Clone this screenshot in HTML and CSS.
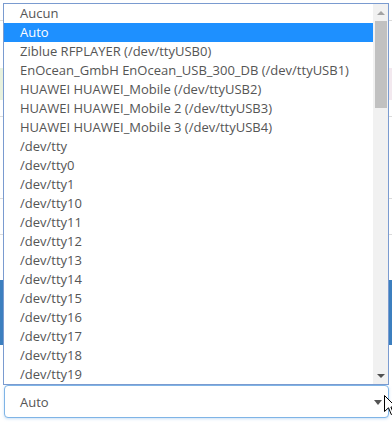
FILE: index.html
```html
<!DOCTYPE html>
<html>
<head>
<meta charset="utf-8">
<title>Select</title>
<link rel="stylesheet" href="styles.css">
</head>
<body>
<div class="page">
  <div class="bg-row bg-top"></div>
  <div class="bg-gap g1"></div>
  <div class="bg-green"></div>
  <div class="bg-row bg-b"></div>
  <div class="bg-row bg-c"></div>
  <div class="bg-row bg-d"></div>
  <div class="bg-gap g2"></div>
  <div class="bg-blue"></div>
  <div class="bg-gap g3"></div>
  <div class="select">
    <span class="select-value">Auto</span>
    <span class="caret"></span>
  </div>
</div>

<div class="popup">
  <div class="options">
    <div class="opt">Aucun</div>
    <div class="opt selected">Auto</div>
    <div class="opt">Ziblue RFPLAYER (/dev/ttyUSB0)</div>
    <div class="opt">EnOcean_GmbH EnOcean_USB_300_DB (/dev/ttyUSB1)</div>
    <div class="opt">HUAWEI HUAWEI_Mobile (/dev/ttyUSB2)</div>
    <div class="opt">HUAWEI HUAWEI_Mobile 2 (/dev/ttyUSB3)</div>
    <div class="opt">HUAWEI HUAWEI_Mobile 3 (/dev/ttyUSB4)</div>
    <div class="opt">/dev/tty</div>
    <div class="opt">/dev/tty0</div>
    <div class="opt">/dev/tty1</div>
    <div class="opt">/dev/tty10</div>
    <div class="opt">/dev/tty11</div>
    <div class="opt">/dev/tty12</div>
    <div class="opt">/dev/tty13</div>
    <div class="opt">/dev/tty14</div>
    <div class="opt">/dev/tty15</div>
    <div class="opt">/dev/tty16</div>
    <div class="opt">/dev/tty17</div>
    <div class="opt">/dev/tty18</div>
    <div class="opt">/dev/tty19</div>
  </div>
  <div class="scrollbar">
    <div class="sb-btn"><span class="tri up"></span></div>
    <div class="sb-track"><div class="thumb"></div></div>
    <div class="sb-btn"><span class="tri down"></span></div>
  </div>
</div>

<svg class="cursor" width="13" height="21" viewBox="0 0 13 21" xmlns="http://www.w3.org/2000/svg">
  <path d="M0.5 0.5 L0.5 16.5 L4.5 12.8 L7.3 19.5 L9.6 18.5 L6.9 12 L12 12 Z" fill="#fff" stroke="#000" stroke-width="1" stroke-linejoin="miter"/>
</svg>
</body>
</html>
```

FILE: styles.css
```css
* { box-sizing: border-box; }

html, body {
  margin: 0;
  padding: 0;
  background: #fff;
  width: 392px;
  height: 423px;
  overflow: hidden;
  font-family: "Open Sans", "Liberation Sans", sans-serif;
}

.page {
  display: flex;
  flex-direction: column;
  width: 392px;
  height: 423px;
}

.bg-row { border-bottom: 1px solid #dcdcdc; }
.bg-top { height: 21px; }
.g1 { height: 47px; }
.bg-green {
  height: 32px;
  background: linear-gradient(to right, #e8f1de 0, #e8f1de 380px, #f3e9ef 380px);
}
.bg-b { height: 17px; }
.bg-c { height: 82px; }
.bg-d { height: 36px; }
.g2 { height: 45px; }
.bg-blue { height: 65px; background: #3c7fbf; }
.g3 { height: 40px; flex-shrink: 0; }

.select {
  flex-shrink: 0;
  margin: 0 3px 0 4px;
  height: 33px;
  border: 1px solid #7fb4e6;
  border-radius: 4px;
  box-shadow: 0 1px 3px rgba(102, 165, 230, 0.35);
  background: #fff;
  display: flex;
  align-items: center;
  justify-content: space-between;
  padding: 0 6px 0 15px;
  font-size: 13px;
  color: #555;
}

.caret {
  width: 0;
  height: 0;
  border-left: 4px solid transparent;
  border-right: 4px solid transparent;
  border-top: 5px solid #555;
  margin-top: 1px;
}

.popup {
  position: absolute;
  left: 3px;
  top: 3px;
  width: 386px;
  height: 382px;
  border: 1px solid #7a9bd0;
  background: #fff;
  display: flex;
}

.options {
  flex: 1;
  display: flex;
  flex-direction: column;
}

.opt {
  height: 19px;
  line-height: 19px;
  padding-left: 16px;
  font-size: 13px;
  color: #555;
  white-space: nowrap;
}

.opt.selected {
  background: #1e90ff;
  color: #fff;
}

.scrollbar {
  width: 15px;
  background: #f1f1f1;
  display: flex;
  flex-direction: column;
}

.sb-btn {
  height: 17px;
  display: flex;
  align-items: center;
  justify-content: center;
}

.sb-track {
  flex: 1;
  padding: 0 1px 0 2px;
}

.thumb {
  height: 87px;
  background: #c1c1c1;
}

.tri {
  width: 0;
  height: 0;
  border-left: 4px solid transparent;
  border-right: 4px solid transparent;
}
.tri.up { border-bottom: 4px solid #a3a3a3; }
.tri.down { border-top: 4px solid #505050; }

.cursor {
  position: absolute;
  left: 384px;
  top: 395px;
}
```
